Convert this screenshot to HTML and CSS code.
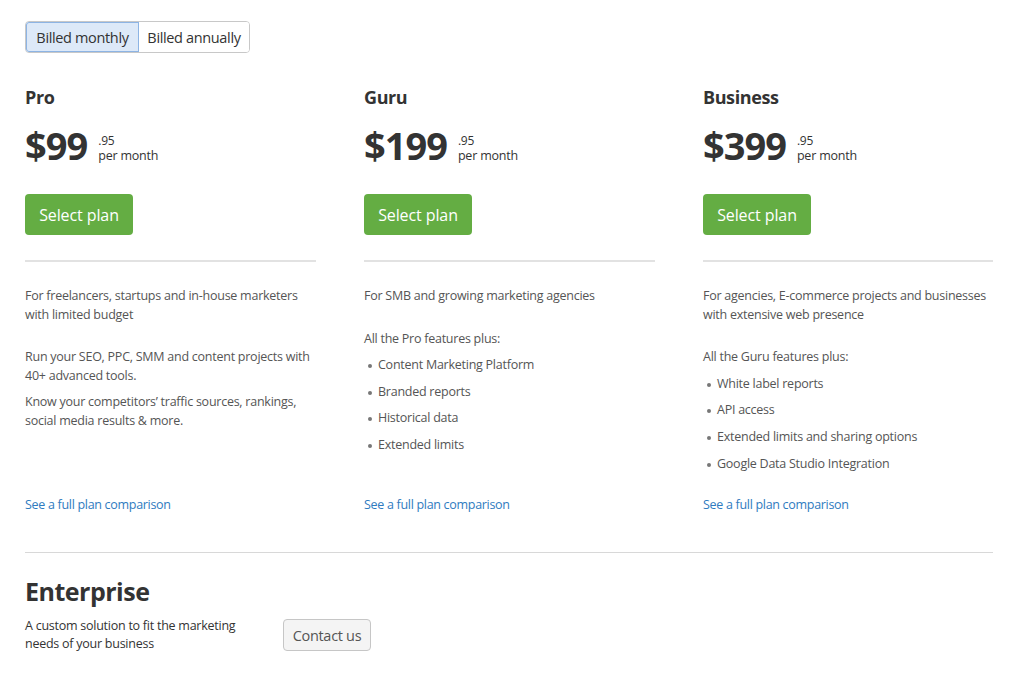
FILE: index.html
```html
<!DOCTYPE html>
<html lang="en">
<head>
<meta charset="utf-8">
<title>Pricing</title>
<link rel="stylesheet" href="styles.css">
</head>
<body>
<main class="page">
  <div class="toggle">
    <button class="toggle-btn active">Billed monthly</button>
    <button class="toggle-btn">Billed annually</button>
  </div>

  <section class="plans">
    <article class="plan">
      <h2 class="plan-name">Pro</h2>
      <div class="price"><span class="amount">$99</span><span class="price-meta"><span class="cents">.95</span><span class="period">per month</span></span></div>
      <a class="select-btn" href="#">Select plan</a>
      <hr class="divider">
      <div class="plan-body">
        <p class="desc">For freelancers, startups and in-house marketers with limited budget</p>
        <p class="desc spaced">Run your SEO, PPC, SMM and content projects with 40+ advanced tools.</p>
        <p class="desc tight">Know your competitors’ traffic sources, rankings, social media results &amp; more.</p>
      </div>
      <a class="compare" href="#">See a full plan comparison</a>
    </article>

    <article class="plan">
      <h2 class="plan-name">Guru</h2>
      <div class="price"><span class="amount">$199</span><span class="price-meta"><span class="cents">.95</span><span class="period">per month</span></span></div>
      <a class="select-btn" href="#">Select plan</a>
      <hr class="divider">
      <div class="plan-body">
        <p class="desc">For SMB and growing marketing agencies</p>
        <p class="desc spaced">All the Pro features plus:</p>
        <ul class="features">
          <li>Content Marketing Platform</li>
          <li>Branded reports</li>
          <li>Historical data</li>
          <li>Extended limits</li>
        </ul>
      </div>
      <a class="compare" href="#">See a full plan comparison</a>
    </article>

    <article class="plan">
      <h2 class="plan-name">Business</h2>
      <div class="price"><span class="amount">$399</span><span class="price-meta"><span class="cents">.95</span><span class="period">per month</span></span></div>
      <a class="select-btn" href="#">Select plan</a>
      <hr class="divider">
      <div class="plan-body">
        <p class="desc">For agencies, E-commerce projects and businesses with extensive web presence</p>
        <p class="desc spaced">All the Guru features plus:</p>
        <ul class="features">
          <li>White label reports</li>
          <li>API access</li>
          <li>Extended limits and sharing options</li>
          <li>Google Data Studio Integration</li>
        </ul>
      </div>
      <a class="compare" href="#">See a full plan comparison</a>
    </article>
  </section>

  <hr class="full-divider">

  <section class="enterprise">
    <h2 class="ent-title">Enterprise</h2>
    <div class="ent-row">
      <p class="ent-desc">A custom solution to fit the marketing needs of your business</p>
      <a class="contact-btn" href="#">Contact us</a>
    </div>
  </section>
</main>
</body>
</html>
```

FILE: styles.css
```css
* { box-sizing: border-box; }

body {
  margin: 0;
  background: #fff;
  font-family: "Open Sans", "Noto Sans", sans-serif;
  color: #333;
}

.page {
  width: 968px;
  margin-left: 25px;
  padding-top: 21px;
}

.toggle {
  display: inline-flex;
  height: 32px;
  border: 1px solid #c8c8c8;
  border-radius: 4px;
  overflow: hidden;
}

.toggle-btn {
  font-family: inherit;
  font-size: 14.5px;
  letter-spacing: -0.35px;
  white-space: nowrap;
  color: #333;
  background: #fff;
  border: 0;
  padding: 0;
  margin: 0;
  cursor: pointer;
}

.toggle-btn.active {
  width: 113px;
  background: #dde9f8;
  box-shadow: inset 0 0 0 1px #8db4e4;
  border-radius: 3px 0 0 3px;
}

.toggle-btn:not(.active) { width: 110px; }

.plans {
  display: grid;
  grid-template-columns: 291px 291px 290px;
  column-gap: 48px;
  margin-top: 32px;
}

.plan {
  display: flex;
  flex-direction: column;
}

.plan-name {
  margin: 0;
  font-size: 18px;
  line-height: 24px;
  font-weight: 700;
  letter-spacing: -0.4px;
  color: #333;
}

.price {
  display: flex;
  align-items: flex-start;
  margin-top: 13px;
  height: 48px;
}

.amount {
  font-size: 38px;
  line-height: 46px;
  font-weight: 700;
  letter-spacing: -1px;
  color: #333;
}

.price-meta {
  display: flex;
  flex-direction: column;
  margin-left: 11px;
  margin-top: 12px;
  font-size: 12.5px;
  letter-spacing: -0.2px;
  color: #333;
}

.cents { font-size: 12px; line-height: 14px; }
.period { line-height: 16px; }

.select-btn {
  display: inline-flex;
  align-items: center;
  justify-content: center;
  align-self: flex-start;
  width: 108px;
  height: 41px;
  margin-top: 24px;
  background: #64ad43;
  color: #fff;
  font-size: 16px;
  letter-spacing: -0.1px;
  text-decoration: none;
  border-radius: 4px;
}

.divider {
  width: 100%;
  height: 0;
  margin: 25px 0 0;
  border: 0;
  border-top: 2px solid #e2e2e2;
}

.plan-body {
  padding-top: 25px;
}

.desc {
  margin: 0;
  font-size: 12.5px;
  line-height: 18.5px;
  letter-spacing: -0.25px;
  color: #555;
}

.desc.spaced { margin-top: 24px; }
.desc.tight { margin-top: 8px; }

.features {
  list-style: none;
  margin: 8px 0 0;
  padding: 0;
}

.features li {
  position: relative;
  padding-left: 14px;
  font-size: 12.5px;
  line-height: 18px;
  letter-spacing: -0.25px;
  color: #555;
  margin-bottom: 8.7px;
}

.features li::before {
  content: "";
  position: absolute;
  left: 4px;
  top: 8px;
  width: 4px;
  height: 4px;
  border-radius: 50%;
  background: #777;
}

.compare {
  margin-top: auto;
  padding-top: 15px;
  font-size: 12.5px;
  line-height: 18px;
  letter-spacing: -0.3px;
  color: #2f7bc0;
  text-decoration: none;
  align-self: flex-start;
}

.full-divider {
  height: 0;
  margin: 38px 0 0;
  border: 0;
  border-top: 1px solid #d8d8d8;
}

.enterprise { padding-top: 22px; }

.ent-title {
  margin: 0;
  font-size: 25px;
  line-height: 32px;
  font-weight: 700;
  letter-spacing: -0.5px;
  color: #333;
}

.ent-row {
  display: flex;
  align-items: center;
  margin-top: 10px;
}

.ent-desc {
  width: 258px;
  margin: 0;
  padding-right: 20px;
  font-size: 12.5px;
  line-height: 18px;
  letter-spacing: -0.25px;
  color: #333;
}

.contact-btn {
  display: inline-flex;
  align-items: center;
  justify-content: center;
  width: 88px;
  height: 32px;
  background: #f4f4f4;
  border: 1px solid #c6c6c6;
  border-radius: 4px;
  color: #555;
  font-size: 14.5px;
  letter-spacing: -0.3px;
  text-decoration: none;
}
```
